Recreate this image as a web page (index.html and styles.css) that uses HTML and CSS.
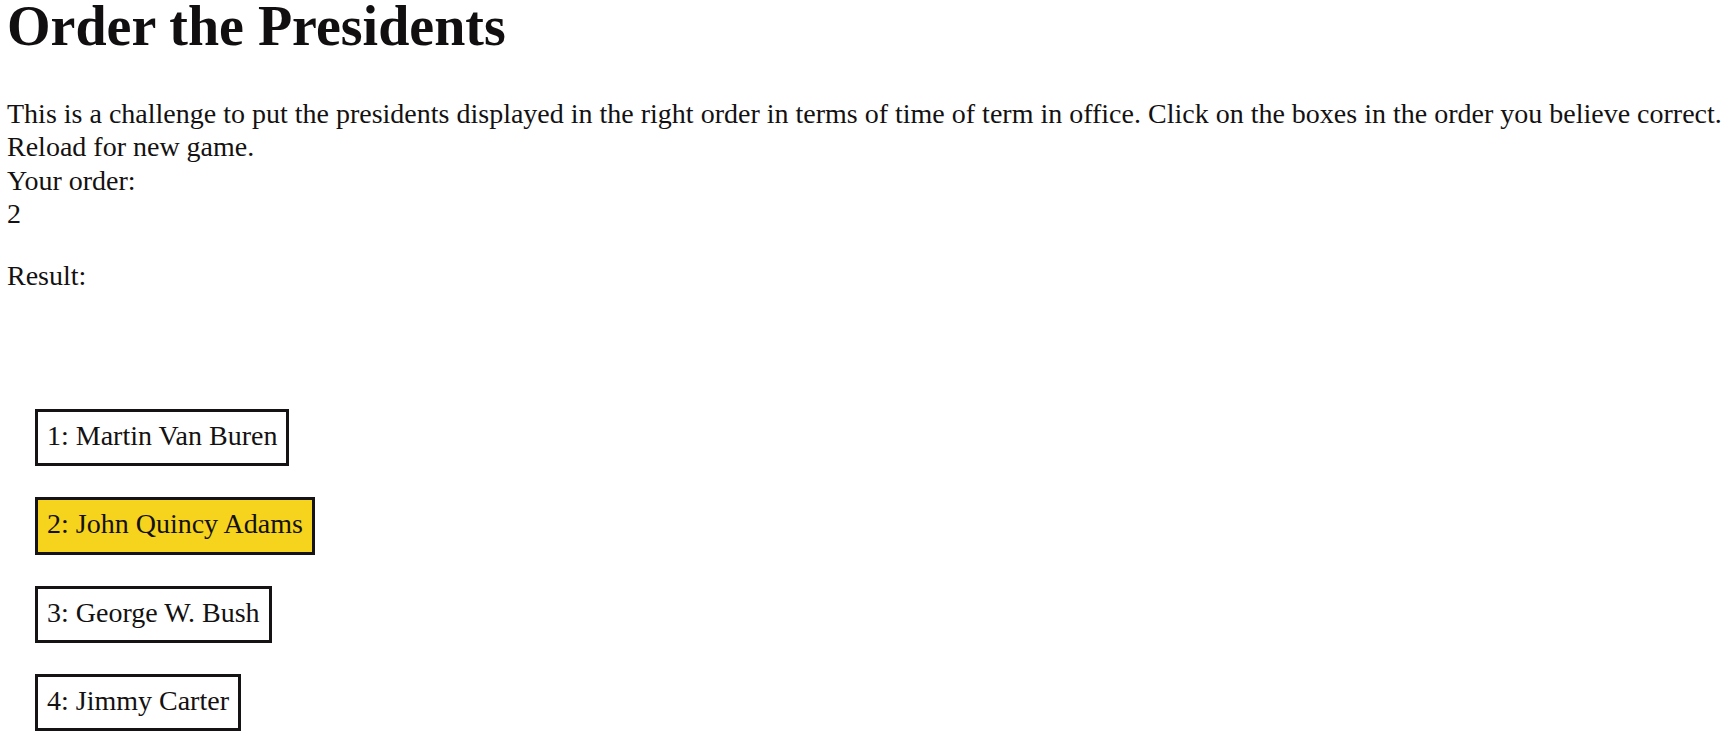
FILE: index.html
```html
<!DOCTYPE html>
<html>
<head>
<meta charset="utf-8">
<title>Order the Presidents</title>
<link rel="stylesheet" href="styles.css">
</head>
<body>
<div class="page">
  <h1 class="title">Order the Presidents</h1>
  <div class="intro">This is a challenge to put the presidents displayed in the right order in terms of time of term in office. Click on the boxes in the order you believe correct.<br>Reload for new game.</div>
  <div class="label">Your order:</div>
  <div class="order">2</div>
  <div class="result">Result:</div>
  <div class="boxes">
    <div class="box">1: Martin Van Buren</div>
    <div class="box selected">2: John Quincy Adams</div>
    <div class="box">3: George W. Bush</div>
    <div class="box">4: Jimmy Carter</div>
  </div>
</div>
</body>
</html>
```
FILE: styles.css
```css
html, body {
  margin: 0;
  padding: 0;
  background: #ffffff;
}
body {
  font-family: "Liberation Serif", "Times New Roman", serif;
  font-size: 28px;
  line-height: 33.3px;
  color: #141112;
}
.page {
  padding-left: 7px;
}
.title {
  margin: 0 0 45px 0;
  font-size: 56px;
  line-height: 52px;
  font-weight: bold;
  color: #120f10;
}
.result {
  margin-top: 28.8px;
}
.boxes {
  margin-top: 116.7px;
  margin-left: 28px;
  display: flex;
  flex-direction: column;
  align-items: flex-start;
  gap: 31px;
}
.box {
  border: 3px solid #161314;
  padding: 7px 9px 11px 9px;
  background: #ffffff;
}
.box.selected {
  background: #f6d31d;
}
```
